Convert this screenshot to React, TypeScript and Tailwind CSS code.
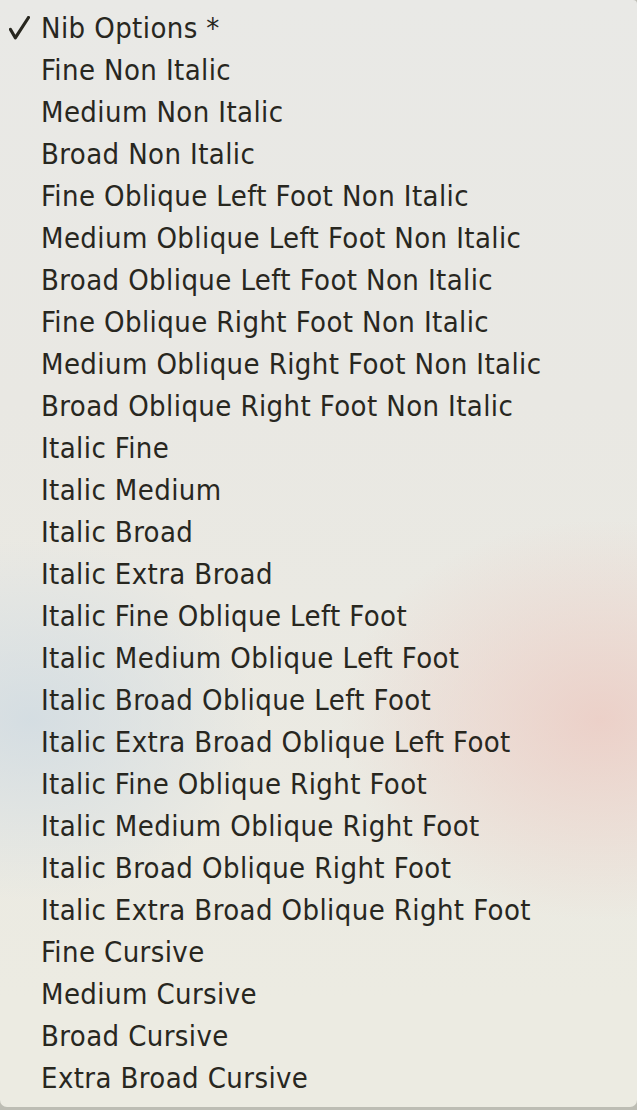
import React from "react";

const items = [
  "Fine Non Italic",
  "Medium Non Italic",
  "Broad Non Italic",
  "Fine Oblique Left Foot Non Italic",
  "Medium Oblique Left Foot Non Italic",
  "Broad Oblique Left Foot Non Italic",
  "Fine Oblique Right Foot Non Italic",
  "Medium Oblique Right Foot Non Italic",
  "Broad Oblique Right Foot Non Italic",
  "Italic Fine",
  "Italic Medium",
  "Italic Broad",
  "Italic Extra Broad",
  "Italic Fine Oblique Left Foot",
  "Italic Medium Oblique Left Foot",
  "Italic Broad Oblique Left Foot",
  "Italic Extra Broad Oblique Left Foot",
  "Italic Fine Oblique Right Foot",
  "Italic Medium Oblique Right Foot",
  "Italic Broad Oblique Right Foot",
  "Italic Extra Broad Oblique Right Foot",
  "Fine Cursive",
  "Medium Cursive",
  "Broad Cursive",
  "Extra Broad Cursive",
];

export default function App() {
  return (
    <div className="w-[637px] h-[1110px] bg-[#bdbdb4] overflow-hidden">
      <div
        className="relative w-[637px] h-[1107px] rounded-b-[7px] rounded-tr-[4px] overflow-hidden bg-[#ecebe2] text-[#28271f]"
        style={{
          backgroundImage:
            "radial-gradient(ellipse 260px 200px at 600px 720px, rgba(236,204,196,0.85), rgba(236,204,196,0) 100%), radial-gradient(ellipse 230px 180px at 30px 720px, rgba(210,220,226,0.9), rgba(210,220,226,0) 100%), linear-gradient(to bottom, #e9e9e6 0px, #e9e8e3 400px, #ecebe2 1000px)",
        }}
      >
        <ul className="flex flex-col pt-[7px] font-['DejaVu_Sans_Condensed','DejaVu_Sans',sans-serif] text-[29px] tracking-[0.4px] leading-[42px]">
          <li className="flex items-center h-[42px]">
            <span className="w-[41px] flex items-center pl-[9px]">
              <svg width="21" height="24" viewBox="0 0 21 24" fill="none">
                <path d="M1.5 13.5 L6.3 21.8 L19.5 1.5" stroke="#28271f" strokeWidth="3.2" strokeLinecap="round" strokeLinejoin="round" />
              </svg>
            </span>
            <span>Nib Options *</span>
          </li>
          {items.map((t) => (
            <li key={t} className="flex items-center h-[42px] pl-[41px]">
              {t}
            </li>
          ))}
        </ul>
      </div>
    </div>
  );
}
